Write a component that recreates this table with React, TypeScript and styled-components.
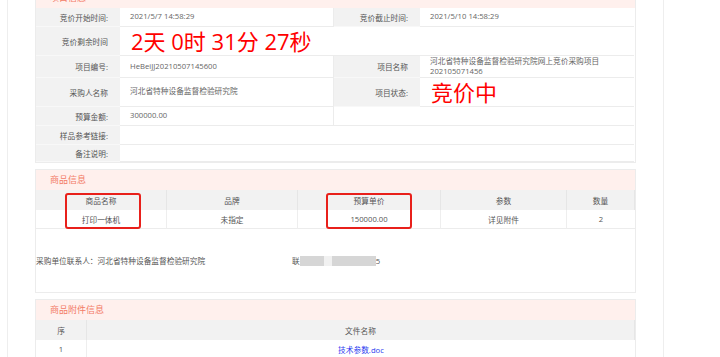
import React from "react";
import styled, { createGlobalStyle } from "styled-components";

const Global = createGlobalStyle`
  html, body { margin: 0; padding: 0; background: #fff; }
  body { font-family: "Open Sans", "Noto Sans CJK SC", "Noto Sans", sans-serif; overflow: hidden; }
  * { box-sizing: border-box; }
`;

const Page = styled.div`
  margin-left: 7px;
  width: 657px;
  height: 357px;
  border-left: 1px solid #eeeeee;
  border-right: 1px solid #eeeeee;
  padding: 0 27px;
  overflow: hidden;
`;

const Content = styled.div`
  margin-top: -13px;
  display: flex;
  flex-direction: column;
  gap: 6px;
`;

const Section = styled.section`
  border: 1px solid #ececec;
  position: relative;
`;

const SectionHead = styled.div`
  height: 20px;
  background: #fff0ed;
  color: #f37b66;
  font-size: 9px;
  line-height: 20px;
  padding-left: 14px;
`;

const InfoGrid = styled.div`
  display: grid;
  grid-template-columns: 84px 214px 86px 214px;
  grid-template-rows: 19px 29px 22px 29px 19px 19px 17px;
`;

const Label = styled.div`
  background: #f2f2f2;
  border-bottom: 1px solid #f8f8f8;
  color: #555;
  font-size: 7.7px;
  display: flex;
  align-items: center;
  justify-content: flex-end;
  padding-right: 12px;
  white-space: nowrap;
`;

const Value = styled.div<{ $span?: number; $big?: boolean; $divider?: boolean }>`
  grid-column: span ${(p) => p.$span ?? 1};
  border-bottom: 1px solid #ececec;
  ${(p) => (p.$divider ? "border-right: 1px solid #ececec;" : "")}
  color: ${(p) => (p.$big ? "#ff0000" : "#666")};
  font-size: ${(p) => (p.$big ? "22px" : "7.7px")};
  line-height: ${(p) => (p.$big ? "22px" : "9.5px")};
  display: flex;
  align-items: center;
  padding-left: ${(p) => (p.$big ? "11px" : "10px")};
  padding-right: 6px;
  white-space: pre-line;
`;

const GoodsGrid = styled.div<{ $cols: string }>`
  display: grid;
  grid-template-columns: ${(p) => p.$cols};
`;

const HeadCell = styled.div`
  height: 20px;
  background: #f2f2f2;
  color: #555;
  font-size: 7.7px;
  display: flex;
  align-items: center;
  justify-content: center;
  border-right: 1px solid #e6e6e6;
  &:last-child { border-right: none; }
`;

const BodyCell = styled.div<{ $link?: boolean }>`
  height: 19px;
  background: #fff;
  color: ${(p) => (p.$link ? "#2b3cf0" : "#555")};
  font-size: 7.7px;
  display: flex;
  align-items: center;
  justify-content: center;
  border-right: 1px solid #eeeeee;
  border-bottom: 1px solid #ececec;
  &:last-child { border-right: none; }
`;

const Contact = styled.div`
  display: flex;
  align-items: center;
  height: 63px;
  font-size: 7.7px;
  color: #555;
`;

const ContactName = styled.span`
  width: 256px;
  white-space: nowrap;
`;

const Blur = styled.span<{ $w: number; $light?: boolean }>`
  display: inline-block;
  width: ${(p) => p.$w}px;
  height: 10px;
  background: ${(p) => (p.$light ? "#f1f1f1" : "#d6d6d6")};
  filter: blur(0.6px);
`;

const Mark = styled.div<{ $left: number; $width: number }>`
  position: absolute;
  top: 23px;
  left: ${(p) => p.$left}px;
  width: ${(p) => p.$width}px;
  height: 36px;
  border: 2px solid #e8201b;
  border-radius: 3px;
`;

export default function App() {
  return (
    <>
      <Global />
      <Page>
        <Content>
          <Section>
            <SectionHead>项目信息</SectionHead>
            <InfoGrid>
              <Label>竞价开始时间:</Label>
              <Value $divider>2021/5/7 14:58:29</Value>
              <Label>竞价截止时间:</Label>
              <Value>2021/5/10 14:58:29</Value>

              <Label>竞价剩余时间</Label>
              <Value $span={3} $big>2天 0时 31分 27秒</Value>

              <Label>项目编号:</Label>
              <Value $divider>HeBeiJJ20210507145600</Value>
              <Label>项目名称</Label>
              <Value>{"河北省特种设备监督检验研究院网上竞价采购项目\n202105071456"}</Value>

              <Label>采购人名称</Label>
              <Value $divider>河北省特种设备监督检验研究院</Value>
              <Label>项目状态:</Label>
              <Value $big>竞价中</Value>

              <Label>预算金额:</Label>
              <Value $divider>300000.00</Value>
              <Value $span={2} />

              <Label>样品参考链接:</Label>
              <Value $span={3} />

              <Label>备注说明:</Label>
              <Value $span={3} />
            </InfoGrid>
          </Section>

          <Section>
            <SectionHead>商品信息</SectionHead>
            <GoodsGrid $cols="131px 131px 143px 126px 1fr">
              <HeadCell>商品名称</HeadCell>
              <HeadCell>品牌</HeadCell>
              <HeadCell>预算单价</HeadCell>
              <HeadCell>参数</HeadCell>
              <HeadCell>数量</HeadCell>
              <BodyCell>打印一体机</BodyCell>
              <BodyCell>未指定</BodyCell>
              <BodyCell>150000.00</BodyCell>
              <BodyCell>详见附件</BodyCell>
              <BodyCell>2</BodyCell>
            </GoodsGrid>
            <Contact>
              <ContactName>采购单位联系人：河北省特种设备监督检验研究院</ContactName>
              <span>联</span>
              <Blur $w={24} />
              <Blur $w={8} $light />
              <Blur $w={44} />
              <span>5</span>
            </Contact>
            <Mark $left={29} $width={76} />
            <Mark $left={290} $width={86} />
          </Section>

          <Section>
            <SectionHead>商品附件信息</SectionHead>
            <GoodsGrid $cols="51px 1fr">
              <HeadCell>序</HeadCell>
              <HeadCell>文件名称</HeadCell>
              <BodyCell>1</BodyCell>
              <BodyCell $link>技术参数.doc</BodyCell>
            </GoodsGrid>
          </Section>
        </Content>
      </Page>
    </>
  );
}
